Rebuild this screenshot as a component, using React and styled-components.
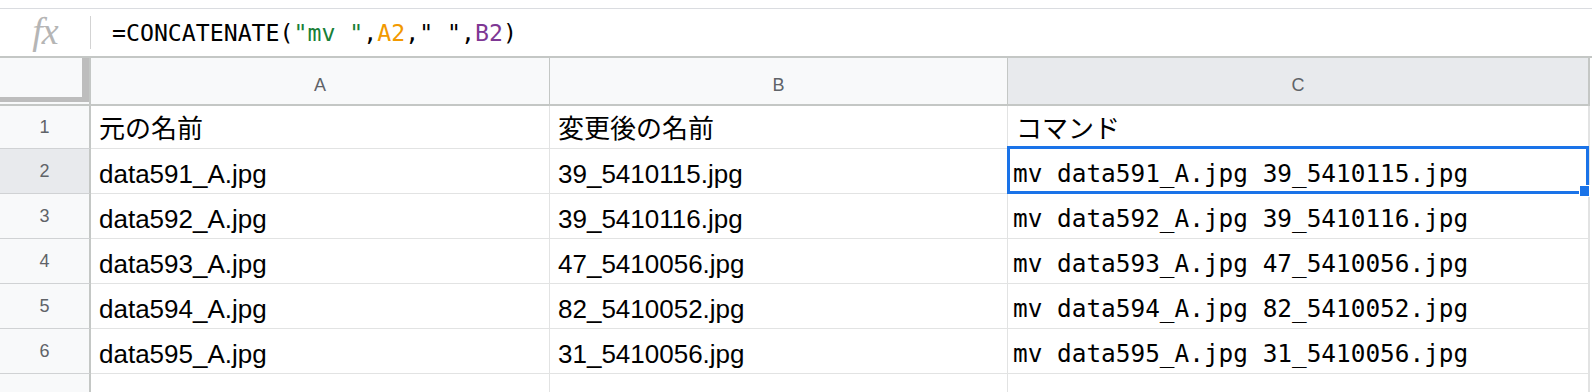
import React from "react";
import styled, { createGlobalStyle } from "styled-components";

const GlobalStyle = createGlobalStyle`
  html, body {
    margin: 0;
    padding: 0;
    background: #ffffff;
  }
  body {
    font-family: "Liberation Sans", Arial, "Noto Sans CJK JP", sans-serif;
    overflow: hidden;
  }
`;

const COLS = "91px 459px 458px 582px";
const HEAD_BG = "#f8f9fa";
const HEAD_SEL = "#e8eaed";
const HEAD_LINE = "#c4c7c5";
const GRID_LINE = "#e2e3e3";
const BLUE = "#1a73e8";

const Page = styled.div`
  width: 1592px;
  height: 392px;
  overflow: hidden;
  position: relative;
`;

const TopStrip = styled.div`
  height: 8px;
  border-bottom: 1px solid #dadce0;
`;

const FormulaBar = styled.div`
  height: 47px;
  display: flex;
  align-items: center;
  border-bottom: 2px solid ${HEAD_LINE};
`;

const FxLabel = styled.div`
  width: 90px;
  text-align: center;
  font-family: "Liberation Serif", "Times New Roman", serif;
  font-style: italic;
  font-size: 38px;
  line-height: 1;
  color: #b5b5b5;
  padding-bottom: 4px;
  letter-spacing: -1px;
`;

const Divider = styled.div`
  width: 1px;
  height: 33px;
  background: #d3d3d3;
`;

const FormulaText = styled.div`
  margin-left: 21px;
  font-family: "DejaVu Sans Mono", "Liberation Mono", monospace;
  font-size: 23.2px;
  white-space: pre;
  color: #000000;
`;

const Tok = styled.span`
  color: ${props => props.color || "#000000"};
`;

const SheetRow = styled.div`
  display: grid;
  grid-template-columns: ${COLS};
  height: ${props => props.h}px;
`;

const Corner = styled.div`
  background: ${HEAD_BG};
  border-right: 2px solid ${HEAD_LINE};
  border-bottom: 2px solid ${HEAD_LINE};
  padding-bottom: 2px;
  display: flex;
`;

const FreezeHandle = styled.div`
  flex: 1;
  border-right: 7px solid #bdbdbd;
  border-bottom: 5px solid #bdbdbd;
`;

const ColHeader = styled.div`
  background: ${props => (props.selected ? HEAD_SEL : HEAD_BG)};
  border-right: ${props => (props.last ? 2 : 1)}px solid ${HEAD_LINE};
  border-bottom: 2px solid ${HEAD_LINE};
  display: flex;
  align-items: center;
  justify-content: center;
  padding-top: 8px;
  font-size: 18px;
  color: #5f6368;
`;

const RowHead = styled.div`
  background: ${props => (props.selected ? HEAD_SEL : HEAD_BG)};
  border-right: 2px solid ${HEAD_LINE};
  border-bottom: 1px solid #d0d2d4;
  display: flex;
  align-items: center;
  justify-content: center;
  font-size: 18px;
  color: #5f6368;
`;

const Cell = styled.div`
  position: relative;
  border-right: ${props => (props.last ? 2 : 1)}px solid ${GRID_LINE};
  border-bottom: 1px solid ${GRID_LINE};
  display: flex;
  align-items: flex-end;
  padding: 0 0 4px ${props => (props.mono ? 5 : 8)}px;
  white-space: nowrap;
  line-height: 30px;
  color: #000000;
  font-size: ${props => (props.mono ? "24.4px" : "26px")};
  font-family: ${props =>
    props.mono
      ? `"DejaVu Sans Mono", "Liberation Mono", monospace`
      : `"Liberation Sans", Arial, "Noto Sans CJK JP", sans-serif`};
`;

const Selection = styled.div`
  position: absolute;
  top: -3px;
  left: -1px;
  right: -1px;
  bottom: -1px;
  border: 3px solid ${BLUE};
  z-index: 2;
  pointer-events: none;
`;

const FillHandle = styled.div`
  position: absolute;
  right: -4px;
  bottom: -6px;
  width: 9px;
  height: 10px;
  background: ${BLUE};
  border: 1px solid #ffffff;
  z-index: 3;
`;

// row 7 is only partly on screen, its number lies below the cut
const rows = [
  { n: 1, h: 43, a: "元の名前", b: "変更後の名前", c: "コマンド", cjk: true },
  { n: 2, h: 45, a: "data591_A.jpg", b: "39_5410115.jpg" },
  { n: 3, h: 45, a: "data592_A.jpg", b: "39_5410116.jpg" },
  { n: 4, h: 45, a: "data593_A.jpg", b: "47_5410056.jpg" },
  { n: 5, h: 45, a: "data594_A.jpg", b: "82_5410052.jpg" },
  { n: 6, h: 45, a: "data595_A.jpg", b: "31_5410056.jpg" },
  { n: 7, h: 45, a: "", b: "", c: "", hidden: true },
];

const SELECTED_ROW = 2;

export default function App() {
  return (
    <Page>
      <GlobalStyle />
      <TopStrip />
      <FormulaBar>
        <FxLabel>fx</FxLabel>
        <Divider />
        <FormulaText>
          =CONCATENATE(
          <Tok color="#188038">"mv "</Tok>,<Tok color="#f29900">A2</Tok>," ",
          <Tok color="#7e3794">B2</Tok>)
        </FormulaText>
      </FormulaBar>

      <SheetRow h={48}>
        <Corner>
          <FreezeHandle />
        </Corner>
        <ColHeader>A</ColHeader>
        <ColHeader>B</ColHeader>
        <ColHeader selected last>
          C
        </ColHeader>
      </SheetRow>

      {rows.map(r => {
        const cmd = r.c !== undefined ? r.c : `mv ${r.a} ${r.b}`;
        const selected = r.n === SELECTED_ROW;
        return (
          <SheetRow key={r.n} h={r.h}>
            <RowHead selected={selected}>{r.hidden ? "" : r.n}</RowHead>
            <Cell>{r.a}</Cell>
            <Cell>{r.b}</Cell>
            <Cell last mono={!r.cjk}>
              {cmd}
              {selected && (
                <Selection>
                  <FillHandle />
                </Selection>
              )}
            </Cell>
          </SheetRow>
        );
      })}
    </Page>
  );
}
